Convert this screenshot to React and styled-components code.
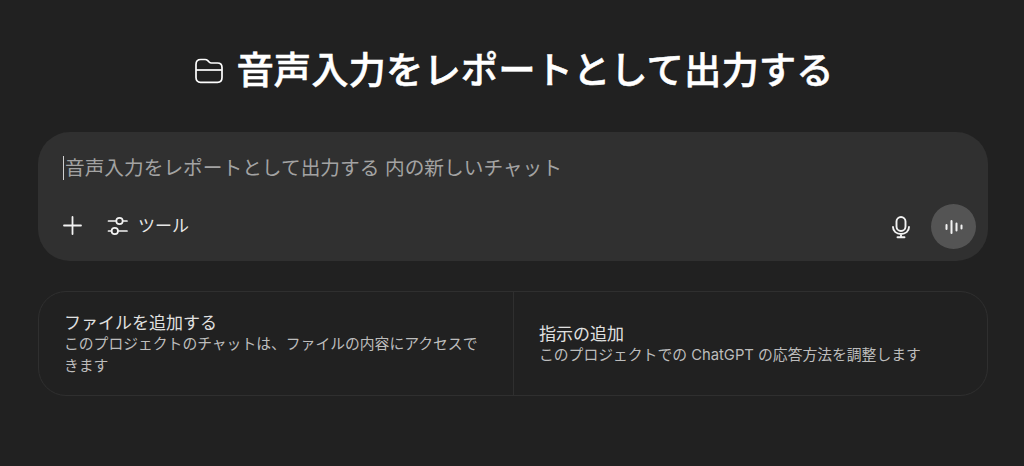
import styled, { createGlobalStyle } from 'styled-components';

const Global = createGlobalStyle`
  html, body {
    margin: 0;
    height: 100%;
    background: #212121;
    overflow: hidden;
  }
  body {
    font-family: Inter, "Noto Sans CJK JP", sans-serif;
    color: #ececec;
  }
`;

const Page = styled.main`
  width: 1024px;
  height: 466px;
  box-sizing: border-box;
  padding: 45px 36px 0 38px;
  display: flex;
  flex-direction: column;
`;

const TitleRow = styled.header`
  height: 52px;
  display: flex;
  align-items: center;
  justify-content: center;
  gap: 13px;
  margin-bottom: 35px;
  padding-left: 3px;
`;

const Title = styled.h1`
  margin: 0;
  font-size: 37.4px;
  line-height: 52px;
  font-weight: 500;
  -webkit-text-stroke: 0.5px #fff;
  color: #fff;
  white-space: nowrap;
`;

const Composer = styled.section`
  height: 129px;
  box-sizing: border-box;
  border-radius: 32px;
  background: #303030;
  padding: 20px 12px 12px 25px;
  display: flex;
  flex-direction: column;
  justify-content: space-between;
`;

const Prompt = styled.div`
  display: flex;
  align-items: center;
  height: 32px;
  font-size: 19.7px;
  line-height: 32px;
  color: #a3a3a3;
  white-space: nowrap;
`;

const Caret = styled.span`
  width: 1px;
  height: 24px;
  margin-right: 1px;
  background: #d0d0d0;
`;

const Toolbar = styled.div`
  display: flex;
  align-items: center;
  height: 45px;
`;

const ToolGroup = styled.div`
  display: flex;
  align-items: center;
  padding-bottom: 2px;
`;

const ToolLabel = styled.span`
  font-size: 17px;
  line-height: 24px;
  color: #e6e6e6;
  margin-left: 10px;
`;

const IconSlot = styled.span`
  display: flex;
  align-items: center;
  margin-left: ${({ $gap }) => $gap || 0}px;
  color: #f2f2f2;
`;

const Spacer = styled.div`
  flex: 1;
`;

const VoiceButton = styled.button`
  width: 45px;
  height: 45px;
  margin-left: 19px;
  padding: 0;
  border: none;
  border-radius: 50%;
  background: #545454;
  color: #f2f2f2;
  display: flex;
  align-items: center;
  justify-content: center;
`;

const Cards = styled.section`
  margin-top: 30px;
  height: 105px;
  box-sizing: border-box;
  border: 1px solid #2f2f2f;
  border-radius: 28px;
  display: grid;
  grid-template-columns: 475px 1fr;
`;

const Card = styled.div`
  box-sizing: border-box;
  padding: 2px 25px 0;
  display: flex;
  flex-direction: column;
  justify-content: center;
  border-right: ${({ $divider }) => ($divider ? '1px solid #2f2f2f' : 'none')};
`;

const CardTitle = styled.div`
  font-size: 17px;
  line-height: 20px;
  color: #e0e0e0;
`;

const CardText = styled.div`
  font-size: 14.8px;
  line-height: 22px;
  color: #bdbdbd;
`;

const FolderIcon = () => (
  <svg width="28" height="26" viewBox="0 0 28 26" fill="none" stroke="#fff" strokeWidth="1.700" strokeLinejoin="round">
    <path d="M1 6.500C1 3.500 2.800 1.500 5.800 1.500h4.200c1.200 0 2 .4 2.800 1.200l1.300 1.300c.7.7 1.400 1 2.300 1h6.100c2.900 0 4.500 1.800 4.500 4.500v10c0 3-1.700 4.800-4.500 4.800H5.500C2.700 24.300 1 22.500 1 19.500z" />
    <path d="M1 12h25.800" />
  </svg>
);

const PlusIcon = () => (
  <svg width="19" height="19" viewBox="0 0 19 19" fill="none" stroke="currentColor" strokeWidth="1.800" strokeLinecap="round">
    <path d="M9.500 1v17M1 9.500h17" />
  </svg>
);

const SlidersIcon = () => (
  <svg width="21" height="20" viewBox="0 0 21 20" fill="none" stroke="currentColor" strokeWidth="1.700" strokeLinecap="round">
    <path d="M1.500 5h7.500M16 5h4M1.500 15h3M11 15h9" />
    <circle cx="12.500" cy="5" r="3.200" />
    <circle cx="7.800" cy="15" r="3.200" />
  </svg>
);

const MicIcon = () => (
  <svg width="22" height="24" viewBox="0 0 22 24" fill="none" stroke="currentColor" strokeWidth="1.900" strokeLinecap="round">
    <rect x="6.500" y="2" width="9" height="14" rx="4.500" />
    <path d="M3 12c0 4.300 3.500 7 8 7s8-2.700 8-7M11 19v3M7.500 22.200h7" />
  </svg>
);

const WaveIcon = () => (
  <svg width="18" height="16" viewBox="0 0 18 16" fill="none" stroke="currentColor" strokeWidth="2" strokeLinecap="round">
    <path d="M1.500 6v4M6.500 2v12M11.500 4.500v7M16.500 6.500v3" />
  </svg>
);

export default function App() {
  return (
    <>
      <Global />
      <Page>
        <TitleRow>
          <FolderIcon />
          <Title>音声入力をレポートとして出力する</Title>
        </TitleRow>
        <Composer>
          <Prompt>
            <Caret />
            音声入力をレポートとして出力する 内の新しいチャット
          </Prompt>
          <Toolbar>
            <ToolGroup>
              <IconSlot>
                <PlusIcon />
              </IconSlot>
              <IconSlot $gap={25}>
                <SlidersIcon />
              </IconSlot>
              <ToolLabel>ツール</ToolLabel>
            </ToolGroup>
            <Spacer />
            <IconSlot>
              <MicIcon />
            </IconSlot>
            <VoiceButton aria-label="voice">
              <WaveIcon />
            </VoiceButton>
          </Toolbar>
        </Composer>
        <Cards>
          <Card $divider>
            <CardTitle>ファイルを追加する</CardTitle>
            <CardText>このプロジェクトのチャットは、ファイルの内容にアクセスできます</CardText>
          </Card>
          <Card>
            <CardTitle>指示の追加</CardTitle>
            <CardText>このプロジェクトでの ChatGPT の応答方法を調整します</CardText>
          </Card>
        </Cards>
      </Page>
    </>
  );
}
